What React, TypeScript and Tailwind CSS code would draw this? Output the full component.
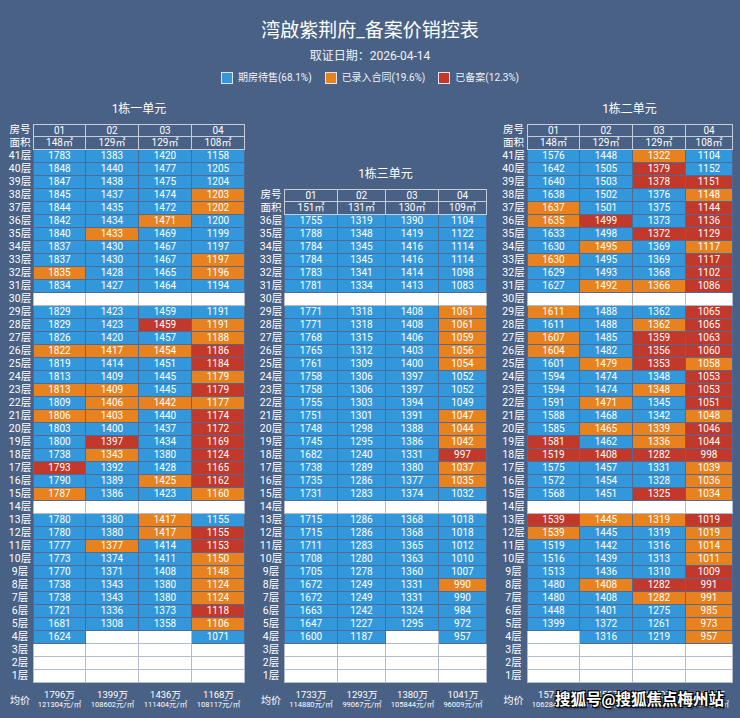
import React from 'react';

type Unit = {
  title: string;
  top: number;
  rows: string[];
  areas: string[];
  cols: string[];
  avg: [string, string][];
  offset: string;
  width: string;
  labelW: string;
};

// b = 期房待售, o = 已录入合同, r = 已备案, - = 空
const unit1Rows = [
  '1783b 1383b 1420b 1158b',
  '1848b 1440b 1477b 1205b',
  '1847b 1438b 1475b 1204b',
  '1845b 1437b 1474b 1203o',
  '1844b 1435b 1472b 1202o',
  '1842b 1434b 1471o 1200b',
  '1840b 1433o 1469b 1199b',
  '1837b 1430b 1467b 1197b',
  '1837b 1430b 1467b 1197o',
  '1835o 1428b 1465b 1196o',
  '1834b 1427b 1464b 1194b',
  '',
  '1829b 1423b 1459b 1191b',
  '1829b 1423b 1459r 1191o',
  '1826b 1420b 1457b 1188o',
  '1822o 1417o 1454o 1186r',
  '1819b 1414b 1451b 1184r',
  '1813b 1409b 1445b 1179o',
  '1813o 1409o 1445b 1179r',
  '1809b 1406o 1442o 1177o',
  '1806o 1403o 1440b 1174r',
  '1803b 1400b 1437b 1172r',
  '1800b 1397r 1434b 1169r',
  '1738b 1343o 1380b 1124r',
  '1793r 1392b 1428b 1165r',
  '1790b 1389b 1425o 1162r',
  '1787o 1386b 1423b 1160o',
  '',
  '1780b 1380b 1417o 1155b',
  '1780b 1380b 1417o 1155r',
  '1777b 1377o 1414b 1153r',
  '1773b 1374b 1411b 1150o',
  '1770b 1371b 1408b 1148o',
  '1738b 1343b 1380b 1124o',
  '1738b 1343b 1380b 1124o',
  '1721b 1336b 1373b 1118r',
  '1681b 1308b 1358b 1106o',
  '1624b - - 1071b',
  '',
  '',
  '',
];

const unit3Rows = [
  '1755b 1319b 1390b 1104b',
  '1788b 1348b 1419b 1122b',
  '1784b 1345b 1416b 1114b',
  '1784b 1345b 1416b 1114b',
  '1783b 1341b 1414b 1098b',
  '1781b 1334b 1413b 1083b',
  '',
  '1771b 1318b 1408b 1061o',
  '1771b 1318b 1408b 1061o',
  '1768b 1315b 1406b 1059o',
  '1765b 1312b 1403b 1056o',
  '1761b 1309b 1400b 1054o',
  '1758b 1306b 1397b 1052b',
  '1758b 1306b 1397b 1052b',
  '1755b 1303b 1394b 1049b',
  '1751b 1301b 1391b 1047o',
  '1748b 1298b 1388b 1044o',
  '1745b 1295b 1386b 1042o',
  '1682b 1240b 1331b 997r',
  '1738b 1289b 1380b 1037o',
  '1735b 1286b 1377b 1035o',
  '1731b 1283b 1374b 1032b',
  '',
  '1715b 1286b 1368b 1018b',
  '1715b 1286b 1368b 1018b',
  '1711b 1283b 1365b 1012b',
  '1708b 1280b 1363b 1010b',
  '1705b 1278b 1360b 1007b',
  '1672b 1249b 1331b 990o',
  '1672b 1249b 1331b 990b',
  '1663b 1242b 1324b 984b',
  '1647b 1227b 1295b 972b',
  '1600b 1187b - 957b',
  '',
  '',
  '',
];

const unit2Rows = [
  '1576b 1448b 1322o 1104b',
  '1642b 1505b 1379r 1152b',
  '1640b 1503b 1378r 1151r',
  '1638b 1502b 1376b 1148o',
  '1637o 1501b 1375b 1144r',
  '1635o 1499r 1373b 1136r',
  '1633b 1498b 1372r 1129r',
  '1630b 1495o 1369b 1117o',
  '1630o 1495b 1369b 1117r',
  '1629b 1493b 1368b 1102r',
  '1627b 1492o 1366o 1086r',
  '',
  '1611o 1488b 1362b 1065r',
  '1611b 1488b 1362o 1065r',
  '1607o 1485b 1359r 1063r',
  '1604o 1482b 1356r 1060r',
  '1601b 1479o 1353r 1058o',
  '1594b 1474b 1348b 1053r',
  '1594b 1474b 1348o 1053r',
  '1591b 1471o 1345b 1051r',
  '1588b 1468b 1342b 1048o',
  '1585b 1465o 1339o 1046r',
  '1581r 1462b 1336o 1044r',
  '1519r 1408r 1282r 998r',
  '1575b 1457b 1331b 1039o',
  '1572b 1454b 1328b 1036o',
  '1568b 1451b 1325r 1034o',
  '',
  '1539r 1445o 1319o 1019r',
  '1539o 1445b 1319b 1019o',
  '1519b 1442b 1316b 1014o',
  '1516b 1439b 1313b 1011o',
  '1513b 1436b 1310b 1009r',
  '1480b 1408o 1282r 991r',
  '1480b 1408b 1282o 991o',
  '1448b 1401b 1275b 985o',
  '1399b 1372b 1261b 973o',
  '- 1316b 1219b 957o',
  '',
  '',
  '',
];

const units: Unit[] = [
  {
    title: '1栋一单元',
    top: 41,
    rows: unit1Rows,
    areas: ['148㎡', '129㎡', '129㎡', '108㎡'],
    cols: ['w-[53px]', 'w-[53px]', 'w-[53px]', 'w-[53px]'],
    avg: [
      ['1796万', '121304元/㎡'],
      ['1399万', '108602元/㎡'],
      ['1436万', '111404元/㎡'],
      ['1168万', '108117元/㎡'],
    ],
    offset: 'mt-0',
    width: 'w-[238px]',
    labelW: 'w-[26px]',
  },
  {
    title: '1栋三单元',
    top: 36,
    rows: unit3Rows,
    areas: ['151㎡', '131㎡', '130㎡', '109㎡'],
    cols: ['w-[54px]', 'w-[48px]', 'w-[53px]', 'w-[48px]'],
    avg: [
      ['1733万', '114880元/㎡'],
      ['1293万', '99067元/㎡'],
      ['1380万', '105844元/㎡'],
      ['1041万', '96009元/㎡'],
    ],
    offset: 'mt-[65px]',
    width: 'w-[229px]',
    labelW: 'w-[26px]',
  },
  {
    title: '1栋二单元',
    top: 41,
    rows: unit2Rows,
    areas: ['148㎡', '129㎡', '129㎡', '108㎡'],
    cols: ['w-[53px]', 'w-[53px]', 'w-[53px]', 'w-[47px]'],
    avg: [
      ['1574万', '106284元/㎡'],
      ['1455万', '112790元/㎡'],
      ['1340万', '103876元/㎡'],
      ['1069万', '98981元/㎡'],
    ],
    offset: 'mt-0',
    width: 'w-[233px]',
    labelW: 'w-[27px]',
  },
];

const statusBg: Record<string, string> = {
  b: 'bg-[#3398db] border-[#4f6b93]',
  o: 'bg-[#e8821f] border-[#4f6b93]',
  r: 'bg-[#c2392b] border-[#4f6b93]',
};

const Label = ({ w, text }: { w: string; text: string }) => (
  <div className={`${w} h-[13px] flex items-center justify-center text-[10.5px] leading-none shrink-0`}>{text}</div>
);

const UnitTable = ({ unit }: { unit: Unit }) => (
  <div className={`${unit.width} ${unit.offset} flex flex-col shrink-0`}>
    <div className={`h-[24px] pb-[6px] flex items-center justify-center text-[12px] leading-none pl-[26px]`}>
      {unit.title}
    </div>

    {/* 房号 / 面积 */}
    <div className="flex">
      <Label w={unit.labelW} text="房号" />
      {['01', '02', '03', '04'].map((n, i) => (
        <div
          key={n}
          className={`${unit.cols[i]} h-[13px] flex items-center justify-center border-t border-r border-b border-[#c6cdd9] ${i === 0 ? 'border-l' : ''} text-[10px] leading-none`}
        >
          {n}
        </div>
      ))}
    </div>
    <div className="flex">
      <Label w={unit.labelW} text="面积" />
      {unit.areas.map((a, i) => (
        <div
          key={i}
          className={`${unit.cols[i]} h-[13px] flex items-center justify-center border-r border-b border-[#c6cdd9] ${i === 0 ? 'border-l' : ''} text-[10px] leading-none`}
        >
          {a}
        </div>
      ))}
    </div>

    {unit.rows.map((row, idx) => {
      const cells = row ? row.split(' ') : ['-', '-', '-', '-'];
      return (
        <div key={idx} className="flex">
          <Label w={unit.labelW} text={`${unit.top - idx}层`} />
          {cells.map((c, i) => {
            if (c === '-') {
              return (
                <div
                  key={i}
                  className={`${unit.cols[i]} h-[13px] bg-white border-r border-b border-[#b3bccd] ${i === 0 ? 'border-l' : ''}`}
                />
              );
            }
            const st = c.slice(-1);
            return (
              <div
                key={i}
                className={`${unit.cols[i]} h-[13px] flex items-center justify-center border-r border-b ${i === 0 ? 'border-l' : ''} ${statusBg[st]} text-[10px] leading-none`}
              >
                {c.slice(0, -1)}
              </div>
            );
          })}
        </div>
      );
    })}

    {/* 均价 */}
    <div className="flex h-[28px]">
      <div className={`${unit.labelW} pt-[8px] flex items-center justify-center text-[10px] leading-none`}>均价</div>
      {unit.avg.map(([total, per], i) => (
        <div key={i} className={`${unit.cols[i]} pt-[7px] flex flex-col items-center`}>
          <span className="text-[9.5px] leading-[10px]">{total}</span>
          <span className="text-[7.5px] leading-[9px] whitespace-nowrap">{per}</span>
        </div>
      ))}
    </div>
  </div>
);

const Legend = ({ color, text }: { color: string; text: string }) => (
  <div className="flex items-center gap-[5px]">
    <span className={`w-[12px] h-[12px] border border-[#dfe5ee] ${color}`} />
    <span className="text-[10px] leading-none text-[#eef2f8]">{text}</span>
  </div>
);

export default function App() {
  return (
    <div className="relative w-[740px] h-[718px] overflow-hidden bg-[#4a6186] text-white font-['Roboto','Noto_Sans_CJK_SC',sans-serif]">
      <header className="pt-[19px] flex flex-col items-center">
        <h1 className="h-[24px] text-[19px] leading-[24px]">湾啟紫荆府_备案价销控表</h1>
        <div className="mt-[5px] h-[16px] text-[12px] leading-[16px] text-[#eef2f8]">取证日期：2026-04-14</div>
        <div className="mt-[7px] h-[14px] flex items-center gap-[13px]">
          <Legend color="bg-[#3398db]" text="期房待售(68.1%)" />
          <Legend color="bg-[#e8821f]" text="已录入合同(19.6%)" />
          <Legend color="bg-[#c2392b]" text="已备案(12.3%)" />
        </div>
      </header>

      <div className="mt-[15px] px-[7px] flex items-start gap-[13px]">
        {units.map((u) => (
          <UnitTable key={u.title} unit={u} />
        ))}
      </div>

      {/* watermark */}
      <div className="absolute left-[555px] top-[690px] text-[15.5px] font-bold leading-[20px] text-white whitespace-nowrap [text-shadow:1px_1px_0_#000,-1px_-1px_0_#000,1px_-1px_0_#000,-1px_1px_0_#000,2px_2px_2px_rgba(0,0,0,0.6)]">
        搜狐号@搜狐焦点梅州站
      </div>
    </div>
  );
}
